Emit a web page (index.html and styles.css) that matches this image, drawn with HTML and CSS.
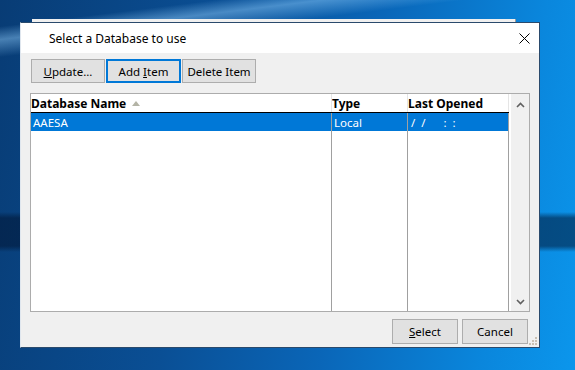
FILE: index.html
```html
<!DOCTYPE html>
<html>
<head>
  <title>Select a Database</title>
  <link rel="stylesheet" href="styles.css">
</head>
<body>
<div class="desktop">
  <div class="back-window"></div>

  <div class="dialog">
    <div class="titlebar">
      <span class="title">Select a Database to use</span>
      <span class="close">
        <svg width="11" height="11" viewBox="0 0 11 11">
          <path d="M0.5 0.5 L10.5 10.5 M10.5 0.5 L0.5 10.5" stroke="#000" stroke-width="1" fill="none"/>
        </svg>
      </span>
    </div>

    <div class="content">
      <div class="toolbar">
        <button class="btn"><u>U</u>pdate...</button>
        <button class="btn default">Add <u>I</u>tem</button>
        <button class="btn">Delete Item</button>
      </div>

      <div class="list">
        <table class="grid">
          <tr class="head">
            <th class="col-name">Database Name <span class="sort"></span></th>
            <th class="col-type">Type</th>
            <th class="col-date">Last Opened</th>
          </tr>
          <tr class="row selected">
            <td>AAESA</td>
            <td>Local</td>
            <td class="date">/  /      :  :</td>
          </tr>
          <tr class="filler">
            <td></td>
            <td></td>
            <td></td>
          </tr>
        </table>
        <div class="scrollbar">
          <svg width="9" height="6" viewBox="0 0 9 6"><path d="M1 5 L4.5 1.5 L8 5" stroke="#606060" stroke-width="1.6" fill="none"/></svg>
          <svg width="9" height="6" viewBox="0 0 9 6"><path d="M1 1 L4.5 4.5 L8 1" stroke="#606060" stroke-width="1.6" fill="none"/></svg>
        </div>
      </div>

      <div class="actions">
        <button class="btn wide"><u>S</u>elect</button>
        <button class="btn wide">Cancel</button>
      </div>
    </div>

    <svg class="grip" width="8" height="8" viewBox="0 0 8 8">
      <rect x="6" y="0" width="2" height="2" fill="#c9c0b4"/>
      <rect x="3" y="3" width="2" height="2" fill="#c9c0b4"/>
      <rect x="6" y="3" width="2" height="2" fill="#c9c0b4"/>
      <rect x="0" y="6" width="2" height="2" fill="#c9c0b4"/>
      <rect x="3" y="6" width="2" height="2" fill="#c9c0b4"/>
      <rect x="6" y="6" width="2" height="2" fill="#c9c0b4"/>
    </svg>
  </div>
</div>
</body>
</html>
```

FILE: styles.css
```css
body {
    margin: 0;
    font-family: "Noto Sans", "Open Sans", sans-serif;
    font-size: 11.5px;
}

.desktop {
    position: relative;
    width: 575px;
    height: 370px;
    overflow: hidden;
    background:
        linear-gradient(to bottom, transparent 212px, rgba(0, 20, 50, 0.55) 218px, rgba(0, 20, 50, 0.55) 246px, transparent 252px),
        linear-gradient(173deg, transparent 6%, rgba(150, 210, 255, 0.45) 9%, transparent 13%),
        linear-gradient(100deg, #083c75 0%, #0a4f95 35%, #0a66b8 60%, #0a86dc 85%, #0b96ec 100%);
}

/* window behind the dialog, only its top edge peeks out */
.back-window {
    position: absolute;
    left: 32px;
    top: 19px;
    width: 483px;
    height: 4px;
    background: #f0f0f0;
    border-right: 1px solid #9a9a9a;
}

.dialog {
    position: absolute;
    left: 20px;
    top: 22px;
    width: 520px;
    height: 326px;
    box-sizing: border-box;
    border: 1px solid #2a4a6c;
    border-left-color: #dfe6ee;
    background: #f0f0f0;
    display: flex;
    flex-direction: column;
}

.titlebar {
    height: 30px;
    background: #fff;
    display: flex;
    align-items: center;
    justify-content: space-between;
    padding-left: 28px;
    padding-right: 9px;
    flex-shrink: 0;
}

.title {
    color: #000;
    font-size: 12px;
}

.close {
    display: flex;
}

.content {
    padding: 6px 0 0 9px;
    display: flex;
    flex-direction: column;
}

.toolbar {
    display: flex;
    gap: 1px;
    margin-left: 1px;
}

.btn {
    font-family: inherit;
    font-size: 11.5px;
    color: #000;
    background: #e1e1e1;
    border: 1px solid #adadad;
    width: 74px;
    height: 24px;
    padding: 0;
    margin: 0;
}

.btn.default {
    border: 2px solid #0078d7;
    width: 75px;
}

.btn.wide {
    width: 66px;
    height: 25px;
}

.list {
    margin-top: 10px;
    width: 500px;
    height: 219px;
    box-sizing: border-box;
    border: 1px solid #acacac;
    background: #fff;
    display: flex;
}

.grid {
    width: 478px;
    height: 100%;
    border-collapse: collapse;
    table-layout: fixed;
}

.grid th, .grid td {
    padding: 0 0 0 1px;
    text-align: left;
    white-space: pre;
    overflow: hidden;
    border-right: 1px solid #a0a0a0;
}

.head th {
    height: 18px;
    font-size: 12px;
    font-weight: bold;
    border-bottom: 1px solid #000;
    border-right-color: #e5e5e5;
    padding-left: 0;
}

.col-name {
    width: 300px;
}

.col-type {
    width: 75px;
}

.col-date {
    width: 100px;
}

.sort {
    display: inline-block;
    width: 0;
    height: 0;
    margin-left: 3px;
    vertical-align: 2px;
    border-left: 4px solid transparent;
    border-right: 4px solid transparent;
    border-bottom: 5px solid #b4b4a6;
}

.row td {
    height: 18px;
    padding-left: 2px;
}

.selected td {
    background: #0078d7;
    color: #fff;
}

.selected .date {
    padding-left: 3px;
}

.filler td {
    height: auto;
}

.scrollbar {
    width: 18px;
    margin-left: 2px;
    background: #f0f0f0;
    display: flex;
    flex-direction: column;
    justify-content: space-between;
    align-items: center;
    padding: 8px 0 6px;
    box-sizing: border-box;
}

.actions {
    display: flex;
    justify-content: flex-end;
    gap: 4px;
    margin-top: 7px;
    margin-right: 11px;
}

.grip {
    position: absolute;
    right: 2px;
    bottom: 2px;
}
```
